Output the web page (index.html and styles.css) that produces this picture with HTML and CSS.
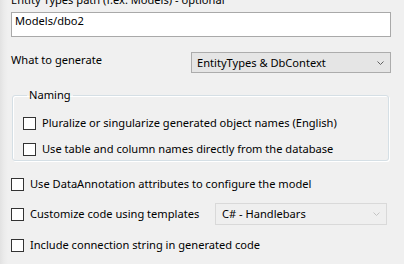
FILE: index.html
```html
<!DOCTYPE html>
<html lang="en">
<head>
    <meta charset="UTF-8">
    <title>Scaffold options</title>
    <link rel="stylesheet" href="styles.css">
</head>
<body>
    <div class="panel">
        <div class="lbl">Entity Types path (f.ex. Models) - optional</div>
        <div class="textbox">Models/dbo2</div>

        <div class="genrow">
            <span>What to generate</span>
            <div class="combo">
                <span>EntityTypes &amp; DbContext</span>
                <svg class="chev" width="7" height="4" viewBox="0 0 7 4"><path d="M0.5 0.5 L3.5 3.5 L6.5 0.5" fill="none" stroke="#606060" stroke-width="1"/></svg>
            </div>
        </div>

        <fieldset class="group">
            <legend>Naming</legend>
            <div class="check"><span class="box"></span>Pluralize or singularize generated object names (English)</div>
            <div class="check second"><span class="box"></span>Use table and column names directly from the database</div>
        </fieldset>

        <div class="check opt1"><span class="box"></span>Use DataAnnotation attributes to configure the model</div>
        <div class="check opt2"><span class="box"></span>Customize code using templates
            <div class="combo disabled">
                <span>C# - Handlebars</span>
                <svg class="chev" width="7" height="4" viewBox="0 0 7 4"><path d="M0.5 0.5 L3.5 3.5 L6.5 0.5" fill="none" stroke="#c4c4c4" stroke-width="1"/></svg>
            </div>
        </div>
        <div class="check opt3"><span class="box"></span>Include connection string in generated code</div>
    </div>
</body>
</html>
```

FILE: styles.css
```css
body {
    margin: 0;
    height: 264px;
    overflow: hidden;
    font-family: "Noto Sans", sans-serif;
    font-size: 11.1px;
    line-height: 16px;
    color: #000;
    background: linear-gradient(to right, #e2e2e2 0px, #ebebeb 4px, #f0f0f0 8px) #f0f0f0;
}
.panel {
    margin-top: -8px;
    padding: 0 13px 0 11px;
}
.lbl {
    height: 16px;
}
.textbox {
    margin-top: 4px;
    height: 25px;
    box-sizing: border-box;
    border: 1px solid #a9a9a9;
    background: #fff;
    padding: 0 3px;
}
.genrow {
    display: flex;
    justify-content: space-between;
    align-items: flex-start;
    margin-top: 15px;
}
.combo {
    width: 200px;
    height: 21px;
    box-sizing: border-box;
    border: 1px solid #acacac;
    background: #e5e5e5;
    display: flex;
    align-items: center;
    justify-content: space-between;
    padding: 0 6px 0 5px;
}
.combo.disabled {
    width: 172px;
    height: 22px;
    margin-left: auto;
    margin-right: 4px;
    background: #efefef;
    border-color: #d9d9d9;
    padding-left: 6px;
}
.group {
    margin: 14px 2px 0 1px;
    padding: 2px 10px 3px;
    border: 1px solid #d5dfe5;
    border-radius: 3px;
    box-shadow: inset 1px 1px #fff, 1px 1px #fff;
}
.group legend {
    padding: 0 2px;
    margin-left: 4px;
}
.check {
    display: flex;
    align-items: center;
    height: 16px;
    margin-top: 10px;
}
.box {
    width: 13px;
    height: 13px;
    box-sizing: border-box;
    border: 1px solid #333;
    background: #fff;
    margin-right: 6px;
    flex: none;
}
.opt1 {
    margin-top: 15px;
}
.opt2 {
    height: 22px;
    margin-top: 11px;
}
.opt3 {
    margin-top: 12px;
}
```
